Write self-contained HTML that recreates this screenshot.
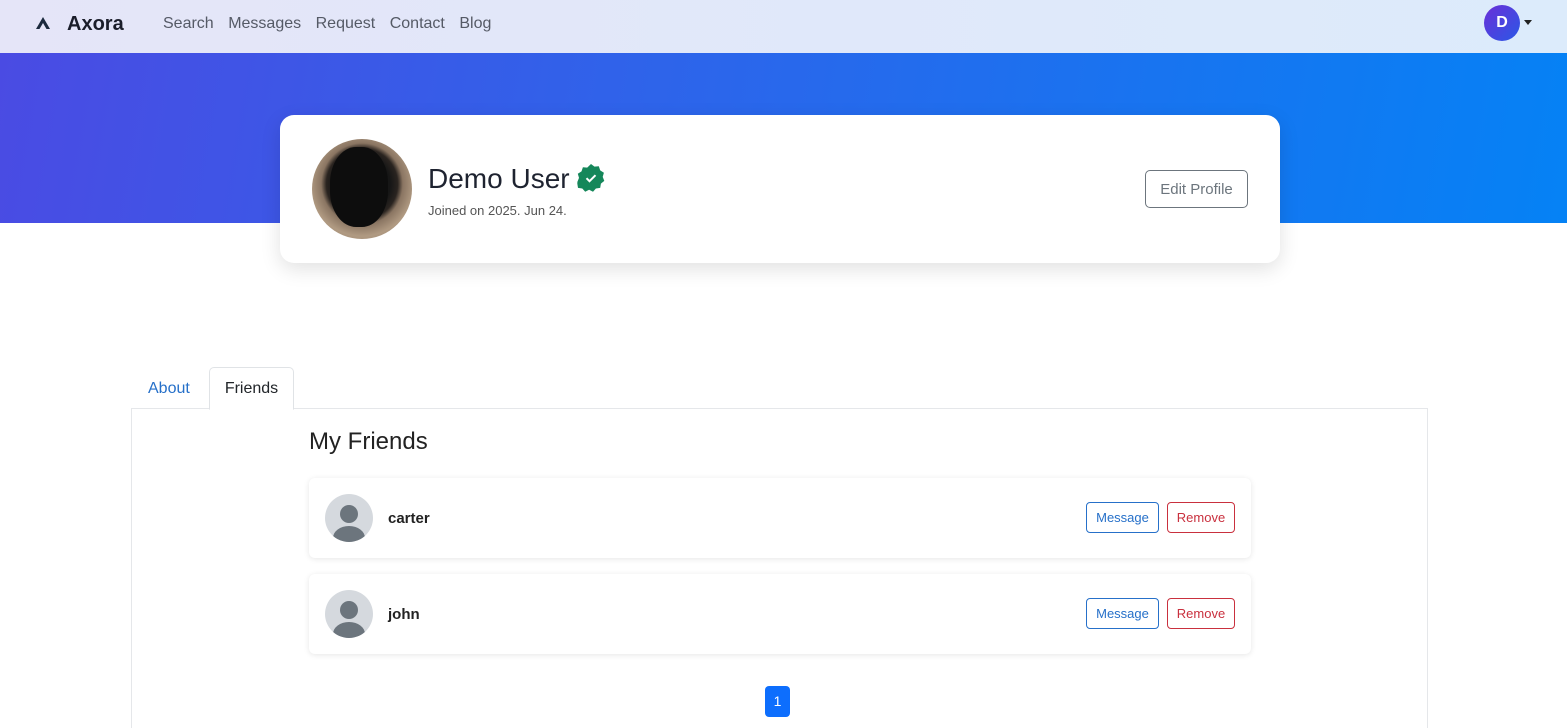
<!DOCTYPE html>
<html><head><style>
*{box-sizing:border-box;margin:0;padding:0}
body{width:1567px;height:724px;overflow:hidden;background:#fff;font-family:"Liberation Sans",sans-serif;color:#212529;position:relative}
.nav{position:absolute;left:0;top:0;width:1567px;height:53px;background:linear-gradient(90deg,#e5e5f8,#dcebfb)}
.nav .brand{position:absolute;left:67px;top:13px;font-size:20px;font-weight:bold;color:#1a1d2a}
.nav .links{position:absolute;left:163px;top:15px;font-size:16px;color:#555a66}
.nav .links span{margin-right:14.5px}
.hero{position:absolute;left:0;top:53px;width:1567px;height:170px;background:linear-gradient(100deg,#4a4be3 0%,#2f63ea 40%,#0582f5 100%)}
.card{position:absolute;left:280px;top:115px;width:1000px;height:148px;background:#fff;border-radius:14px;box-shadow:0 6px 20px rgba(0,0,0,.12)}
.av{position:absolute;left:32px;top:24px;width:100px;height:100px;border-radius:50%;background:radial-gradient(circle at 50% 45%,#111 0,#161616 38%,#2a2420 48%,#8a7562 55%,#b09a82 70%,#8f7a66 100%);overflow:hidden}
.name{position:absolute;left:148px;top:48px;font-size:28px;color:#1e2330}
.joined{position:absolute;left:148px;top:88px;font-size:13px;color:#555}
.edit{position:absolute;left:865px;top:55px;width:103px;height:38px;border:1px solid #6c757d;border-radius:5px;color:#6c757d;font-size:15px;text-align:center;line-height:37px}
.tabs{position:absolute;left:131px;top:408px;width:1297px;height:320px;border:1px solid #e5e7ea;border-bottom:none}
.tab{position:absolute;font-size:16px}
.fc{position:absolute;left:309px;width:942px;height:80px;background:#fff;border-radius:6px;box-shadow:0 1px 6px rgba(0,0,0,.1)}
.fc .pa{position:absolute;left:16px;top:16px;width:48px;height:48px;border-radius:50%;background:#d5d9de;overflow:hidden}
.fc .nm{position:absolute;left:79px;top:32px;font-size:15px;font-weight:bold;color:#222}
.btn{position:absolute;top:24px;height:31px;border:1px solid;border-radius:4px;font-size:13px;text-align:center;line-height:30px}
</style></head><body>
<div class="nav">
<svg style="position:absolute;left:35px;top:16px" width="16" height="14" viewBox="0 0 16 14"><path d="M8 1 L15 13 L11.5 13 L8 7 L4.5 13 L1 13 Z" fill="#1c2a3e"/></svg>
<div class="brand">Axora</div>
<div class="links"><span>Search</span><span>Messages</span><span>Request</span><span>Contact</span><span>Blog</span></div>
<div style="position:absolute;left:1484px;top:5px;width:36px;height:36px;border-radius:50%;background:linear-gradient(135deg,#6a2fd8,#2a58e6);color:#fff;font-weight:bold;font-size:16px;text-align:center;line-height:36px">D</div>
<div style="position:absolute;left:1524px;top:20px;border-left:4px solid transparent;border-right:4px solid transparent;border-top:5px solid #222"></div>
</div>
<div class="hero"></div>
<div class="card">
<div class="av"><div style="position:absolute;left:18px;top:8px;width:58px;height:80px;border-radius:45%;background:#0d0d0d"></div></div>
<div class="name">Demo User</div>
<svg style="position:absolute;left:296px;top:48px" width="30" height="30" viewBox="0 0 30 30"><path d="M15 1l3.5 2.6 4.3-.3 1.4 4.1 3.7 2.3-1.2 4.2 1.6 4-3.4 2.7-.7 4.3-4.3.6-2.9 3.2-3.9-1.9-3.9 1.9-2.9-3.2-4.3-.6-.7-4.3L1.4 18.9l1.6-4-1.2-4.2 3.7-2.3 1.4-4.1 4.3.3z" fill="#15875a"/><path d="M10.5 15.2l3 3 6-6" stroke="#fff" stroke-width="2" fill="none"/></svg>
<div class="joined">Joined on 2025. Jun 24.</div>
<div class="edit">Edit Profile</div>
</div>
<div class="tabs"></div>
<div class="tab" style="left:148px;top:380px;color:#2670c9">About</div>
<div style="position:absolute;left:209px;top:367px;width:85px;height:43px;border:1px solid #e0e3e6;border-bottom:1px solid #fff;border-radius:5px 5px 0 0;background:#fff;font-size:16px;text-align:center;line-height:41px">Friends</div>
<div style="position:absolute;left:309px;top:428px;font-size:24px;color:#222">My Friends</div>
<div class="fc" style="top:478px"><div class="pa"><div style="position:absolute;left:15px;top:11px;width:18px;height:18px;border-radius:50%;background:#6c757d"></div><div style="position:absolute;left:8px;top:32px;width:32px;height:24px;border-radius:50%;background:#6c757d"></div></div><div class="nm">carter</div>
<div class="btn" style="left:777px;width:73px;color:#2670c9;border-color:#2670c9">Message</div><div class="btn" style="left:858px;width:68px;color:#c9303e;border-color:#c9303e">Remove</div></div>
<div class="fc" style="top:574px"><div class="pa"><div style="position:absolute;left:15px;top:11px;width:18px;height:18px;border-radius:50%;background:#6c757d"></div><div style="position:absolute;left:8px;top:32px;width:32px;height:24px;border-radius:50%;background:#6c757d"></div></div><div class="nm">john</div>
<div class="btn" style="left:777px;width:73px;color:#2670c9;border-color:#2670c9">Message</div><div class="btn" style="left:858px;width:68px;color:#c9303e;border-color:#c9303e">Remove</div></div>
<div style="position:absolute;left:765px;top:686px;width:25px;height:31px;background:#0d6efd;border-radius:4px;color:#fff;font-size:14px;text-align:center;line-height:31px">1</div>
</body></html>
